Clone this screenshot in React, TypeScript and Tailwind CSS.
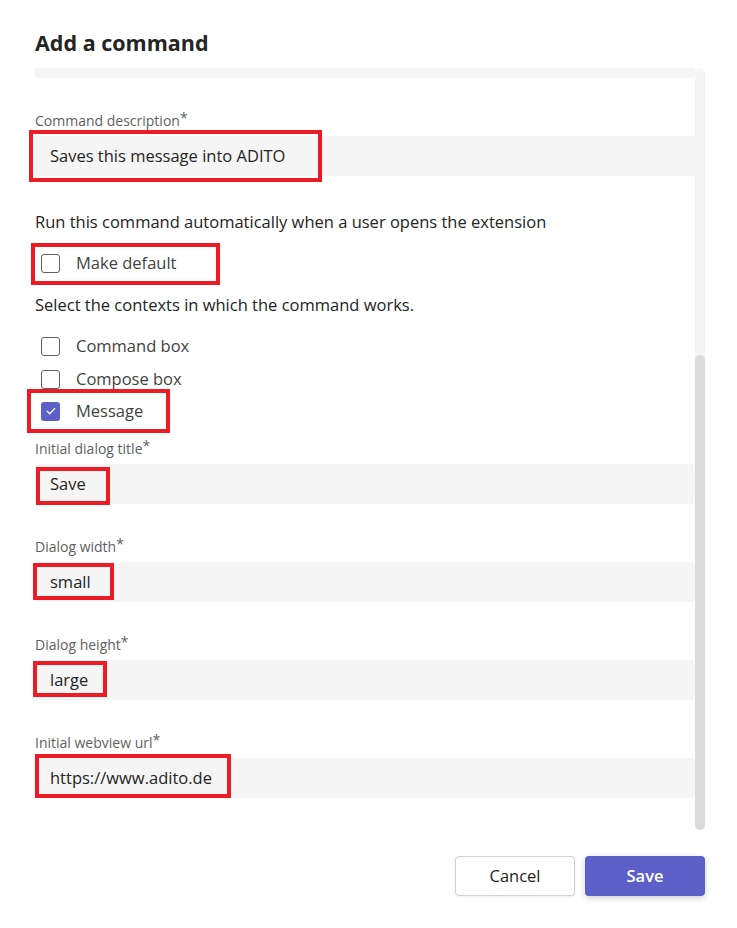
import React from "react";

const font = { fontFamily: '"Open Sans", "Noto Sans", sans-serif' };

function Red({ className }: { className: string }) {
  return <div className={`pointer-events-none absolute border-[4px] border-[#ed1c24] ${className}`} />;
}

function Checkbox({ checked }: { checked?: boolean }) {
  return checked ? (
    <div className="ml-[6px] flex h-[19px] w-[19px] items-center justify-center rounded-[3px] bg-[#5b5fc7]">
      <svg width="12" height="12" viewBox="0 0 12 12" fill="none">
        <path d="M2.2 6.3 L4.8 8.8 L9.8 3.4" stroke="white" strokeWidth="1.3" strokeLinecap="round" strokeLinejoin="round" />
      </svg>
    </div>
  ) : (
    <div className="ml-[6px] h-[19px] w-[19px] rounded-[3px] border border-[#616161] bg-white" />
  );
}

function Field({
  label,
  value,
  red,
  mt,
}: {
  label: string;
  value: string;
  red: string;
  mt: string;
}) {
  return (
    <div className={mt}>
      <div className="h-[20px] text-[14px] leading-[20px] text-[#616161]">
        {label}
        <span className="relative top-[-3px]">*</span>
      </div>
      <div className="relative mt-[5px] flex h-[40px] items-center rounded-[4px] bg-[#f5f5f5] pl-[15px] text-[16.5px] text-[#242424]">
        {value}
        <Red className={red} />
      </div>
    </div>
  );
}

export default function App() {
  return (
    <div className="h-[928px] w-[737px] bg-white" style={font}>
      <div className="pl-[35px] pt-[29px]">
        <h1 className="h-[28px] text-[21.5px] font-bold leading-[28px] text-[#242424]">Add a command</h1>
      </div>
      <div className="mt-[11px] flex h-[762px] pl-[35px] pr-[32px]">
        <div className="w-[660px]">
          <div className="h-[10px] rounded-b-[4px] bg-[#f5f5f5]" />
          <Field
            mt="mt-[33px]"
            label="Command description"
            value="Saves this message into ADITO"
            red="left-[-6px] top-[-6px] h-[52px] w-[293px]"
          />
          <div className="mt-[35px] h-[22px] text-[16.5px] leading-[22px] text-[#242424]">
            Run this command automatically when a user opens the extension
          </div>
          <div className="relative mt-[14px] flex h-[32px] items-center gap-[16px] text-[16.5px] text-[#424242]">
            <Checkbox />
            <span>Make default</span>
            <Red className="left-[-4px] top-[-4px] h-[42px] w-[189px]" />
          </div>
          <div className="mt-[15px] h-[22px] text-[16.5px] leading-[22px] text-[#242424]">
            Select the contexts in which the command works.
          </div>
          <div className="mt-[14px] flex h-[32px] items-center gap-[16px] text-[16.5px] text-[#424242]">
            <Checkbox />
            <span>Command box</span>
          </div>
          <div className="mt-[1px] flex h-[32px] items-center gap-[16px] text-[16.5px] text-[#424242]">
            <Checkbox />
            <span>Compose box</span>
          </div>
          <div className="relative flex h-[32px] items-center gap-[16px] text-[16.5px] text-[#424242]">
            <Checkbox checked />
            <span>Message</span>
            <Red className="left-[-8px] top-[-6px] h-[44px] w-[143px]" />
          </div>
          <Field
            mt="mt-[12px]"
            label="Initial dialog title"
            value="Save"
            red="left-[1px] top-[3px] h-[38px] w-[74px]"
          />
          <Field
            mt="mt-[33px]"
            label="Dialog width"
            value="small"
            red="left-[-2px] top-[1px] h-[37px] w-[81px]"
          />
          <Field
            mt="mt-[33px]"
            label="Dialog height"
            value="large"
            red="left-[-2px] top-[1px] h-[36px] w-[74px]"
          />
          <Field
            mt="mt-[33px]"
            label="Initial webview url"
            value="https://www.adito.de"
            red="left-[0px] top-[-4px] h-[44px] w-[196px]"
          />
        </div>
        <div className="flex h-full w-[10px] flex-col rounded-[5px] bg-[#f5f5f5]">
          <div className="mt-[287px] flex-1 rounded-[5px] bg-[#dbdbdb]" />
        </div>
      </div>
      <div className="mt-[26px] flex justify-end gap-[10px] pr-[32px]">
        <button className="h-[40px] w-[120px] rounded-[4px] border border-[#d1d1d1] bg-white text-[16.5px] text-[#242424] shadow-[0_1px_3px_rgba(0,0,0,0.08)]">
          Cancel
        </button>
        <button className="h-[40px] w-[120px] rounded-[4px] bg-[#5b5fc7] text-[16.5px] font-semibold text-white shadow-[0_2px_6px_rgba(0,0,0,0.2)]">
          Save
        </button>
      </div>
    </div>
  );
}
